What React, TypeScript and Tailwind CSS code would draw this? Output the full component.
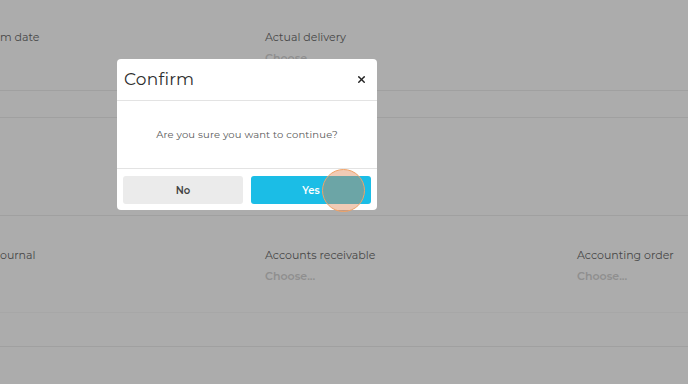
import React from 'react';
import { X } from 'lucide-react';

const font = { fontFamily: 'Montserrat, "Open Sans", "Liberation Sans", sans-serif' };

const Field: React.FC<{ label: string; value?: string; className?: string }> = ({ label, value = 'Choose...', className = '' }) => (
  <div className={`flex flex-col ${className}`}>
    <span className="text-[11px] leading-[14px] text-[#474747]">{label}</span>
    <span className="mt-[7px] text-[11px] leading-[14px] font-semibold text-[#8f8f8f]">{value}</span>
  </div>
);

const ConfirmDialog: React.FC = () => (
  <div className="absolute left-[117px] top-[59px] w-[260px] rounded-[4px] bg-white flex flex-col">
    <div className="h-[42px] flex items-center justify-between pl-[7px] pr-[10px] border-b border-[#e3e3e3]">
      <span className="text-[17px] text-[#2d2d2d] tracking-[0.2px]">Confirm</span>
      <X className="w-[11px] h-[11px] text-[#222]" strokeWidth={3.2} />
    </div>
    <div className="h-[68px] flex items-center justify-center border-b border-[#e3e3e3]">
      <span className="text-[10px] text-[#5a5a5a] tracking-[0.15px]">Are you sure you want to continue?</span>
    </div>
    <div className="flex gap-[8px] px-[6px] pt-[7px] pb-[6px]">
      <button className="flex-1 h-[28px] rounded-[3px] bg-[#ebebeb] text-[10px] font-semibold text-[#444]">No</button>
      <button className="relative flex-1 h-[28px] rounded-[3px] bg-[#1bbde6] text-[10px] font-semibold text-white">
        Yes
        <span className="absolute left-[71px] top-[-7px] w-[43px] h-[43px] rounded-full border-[1.5px] border-[#f0a368] bg-[rgba(222,132,78,0.42)]" />
      </button>
    </div>
  </div>
);

export default function App() {
  return (
    <div className="relative w-[688px] h-[384px] overflow-hidden bg-[#acacac]" style={font}>
      <div className="h-[91px] border-b border-[#a0a0a0] pt-[30px] flex">
        <Field label="m date" value="" className="w-[265px]" />
        <Field label="Actual delivery" className="w-[312px]" />
      </div>
      <div className="h-[27px] border-b border-[#a0a0a0]" />
      <div className="h-[98px] border-b border-[#a0a0a0]" />
      <div className="h-[97px] pt-[32px] flex border-b border-[#a7a7a7]">
        <Field label="ournal" value="" className="w-[265px]" />
        <Field label="Accounts receivable" className="w-[312px]" />
        <Field label="Accounting order" className="w-[111px]" />
      </div>
      <div className="h-[34px] border-b border-[#a0a0a0]" />
      <ConfirmDialog />
    </div>
  );
}
